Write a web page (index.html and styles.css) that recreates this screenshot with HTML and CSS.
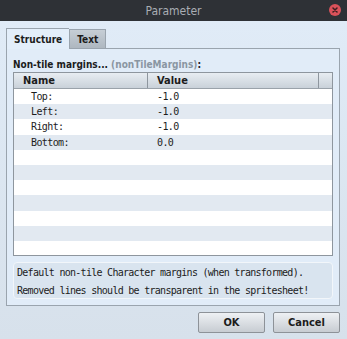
FILE: index.html
```html
<!DOCTYPE html>
<html lang="en">
<head>
    <meta charset="UTF-8">
    <meta name="viewport" content="width=device-width, initial-scale=1.0">
    <title>Parameter</title>
    <link rel="stylesheet" href="styles.css">
</head>
<body>
    <div class="window">
        <div class="titlebar">
            <span class="title">Parameter</span>
            <span class="close">
                <svg width="12" height="12" viewBox="0 0 12 12">
                    <circle cx="6" cy="6" r="6" fill="#d9525a"/>
                    <path d="M4 4 L8 8 M8 4 L4 8" stroke="#3a1e20" stroke-width="1.5" stroke-linecap="round"/>
                </svg>
            </span>
        </div>
        <div class="content">
            <div class="tabs">
                <div class="tab active">Structure</div>
                <div class="tab">Text</div>
            </div>
            <div class="panel">
                <div class="label">Non-tile margins... <span class="key">(nonTileMargins)</span>:</div>
                <div class="table">
                    <div class="thead">
                        <div class="th name">Name</div>
                        <div class="th value">Value</div>
                        <div class="th extra"></div>
                    </div>
                    <div class="row"><span class="cell name">Top:</span><span class="cell value">-1.0</span></div>
                    <div class="row"><span class="cell name">Left:</span><span class="cell value">-1.0</span></div>
                    <div class="row"><span class="cell name">Right:</span><span class="cell value">-1.0</span></div>
                    <div class="row"><span class="cell name">Bottom:</span><span class="cell value">0.0</span></div>
                    <div class="row"></div>
                    <div class="row"></div>
                    <div class="row"></div>
                    <div class="row"></div>
                    <div class="row"></div>
                    <div class="row"></div>
                    <div class="row"></div>
                </div>
                <div class="desc">
                    Default non-tile Character margins (when transformed).<br>
                    Removed lines should be transparent in the spritesheet!
                </div>
            </div>
            <div class="buttons">
                <button class="btn">OK</button>
                <button class="btn">Cancel</button>
            </div>
        </div>
    </div>
</body>
</html>
```

FILE: styles.css
```css
* {
    box-sizing: border-box;
}
body {
    margin: 0;
    font-family: "DejaVu Sans Condensed", "DejaVu Sans", sans-serif;
    font-size: 10px;
}
.window {
    width: 347px;
    height: 339px;
    background-color: #dae4ee;
    display: flex;
    flex-direction: column;
}
.titlebar {
    height: 21px;
    background-color: #2e3136;
    display: flex;
    align-items: center;
    justify-content: center;
    position: relative;
}
.title {
    color: #a9adb3;
    font-family: "DejaVu Sans Condensed", "DejaVu Sans", sans-serif;
    font-size: 12px;
}
.close {
    position: absolute;
    right: 6px;
    top: 4px;
    height: 12px;
}
.content {
    flex: 1;
    padding: 7px 7px 0 6px;
    background: linear-gradient(#e0ebf7, #d7e1eb);
}
.tabs {
    display: flex;
    height: 20px;
    align-items: flex-end;
}
.tab {
    height: 19px;
    padding: 0 7px;
    border: 1px solid #9aa4ae;
    border-bottom: none;
    font-weight: bold;
    font-size: 10px;
    color: #1c1c1c;
    display: flex;
    align-items: center;
    background: linear-gradient(#c6ced6, #aeb7c0);
}
.tab.active {
    height: 21px;
    padding: 0 7px;
    background-color: #e3eefa;
    background-image: none;
    border-right: none;
    position: relative;
    top: 1px;
}
.panel {
    height: 258px;
    border: 1px solid #9aa4ae;
    background-color: #e1ecf8;
    padding: 9px 6px 0 6px;
}
.label {
    font-weight: bold;
    color: #1c1c1c;
    height: 14px;
    line-height: 13px;
}
.key {
    color: #8a96a2;
}
.table {
    border: 1px solid #8e969e;
    background-color: #fff;
    height: 184px;
    overflow: hidden;
}
.thead {
    display: flex;
    height: 16px;
    background: linear-gradient(#e8edf2, #c9d1d9);
    border-bottom: 1px solid #9aa2aa;
}
.th {
    font-weight: bold;
    font-size: 11px;
    color: #1c1c1c;
    line-height: 15px;
    border-right: 1px solid #8e969e;
}
.th.name {
    width: 134px;
    padding-left: 9px;
}
.th.value {
    width: 171px;
    padding-left: 9px;
}
.th.extra {
    flex: 1;
    border-right: none;
}
.row {
    display: flex;
    height: 15.2px;
    align-items: center;
    font-family: "DejaVu Sans Mono", monospace;
    font-size: 10px;
    letter-spacing: -0.6px;
    color: #1c1c1c;
}
.row:nth-child(odd) {
    background-color: #e2e9f1;
}
.cell.name {
    width: 143px;
    padding-left: 17px;
}
.desc {
    margin-top: 6px;
    border: 1px solid #f2f6fa;
    border-radius: 4px;
    background-color: #d9e4ef;
    font-family: "DejaVu Sans Mono", monospace;
    font-size: 10px;
    letter-spacing: -0.72px;
    line-height: 18px;
    color: #1c1c1c;
    padding: 1px 3px;
    height: 37px;
}
.buttons {
    display: flex;
    justify-content: flex-end;
    gap: 8px;
    padding-top: 6px;
}
.btn {
    width: 67px;
    height: 21px;
    border: 1px solid #8d9298;
    border-radius: 2px;
    background: linear-gradient(#eef1f4, #c7ccd2);
    font-family: "DejaVu Sans Condensed", "DejaVu Sans", sans-serif;
    font-weight: bold;
    font-size: 11px;
    color: #1c1c1c;
    padding: 0;
}
```
